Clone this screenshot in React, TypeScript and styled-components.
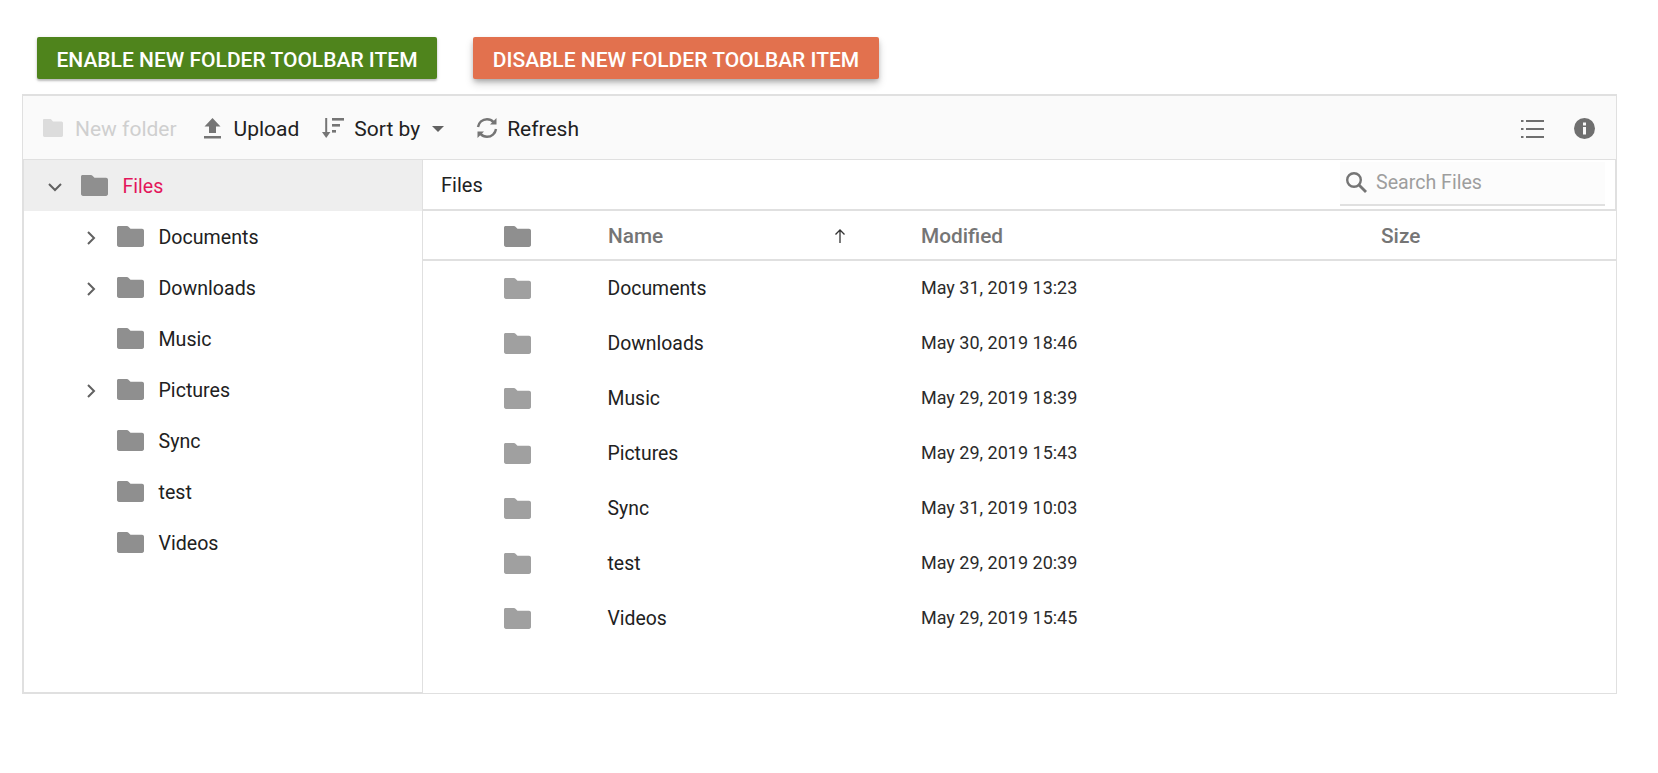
import React from "react";
import styled, { createGlobalStyle } from "styled-components";

const GlobalStyle = createGlobalStyle`
  html, body {
    margin: 0;
    padding: 0;
    background: #fff;
    font-family: Roboto, "Liberation Sans", sans-serif;
  }
`;

const Page = styled.div`
  padding: 37px 41px 0 22px;
`;

const ButtonRow = styled.div`
  display: flex;
  gap: 36px;
  padding-left: 15px;
  margin-bottom: 15px;
`;

const ActionButton = styled.button<{ $bg: string; $raised?: boolean }>`
  height: 42px;
  width: ${(p) => (p.$raised ? 406 : 400)}px;
  padding: 3px 0 0;
  border: 0;
  border-radius: 2px;
  background: ${(p) => p.$bg};
  color: #fff;
  font-family: inherit;
  font-size: 21px;
  font-weight: 500;
  text-transform: uppercase;
  white-space: nowrap;
  box-shadow: ${(p) =>
    p.$raised
      ? "0 3px 5px -1px rgba(0,0,0,.25), 0 5px 8px rgba(0,0,0,.16)"
      : "0 2px 2px rgba(0,0,0,.2), 0 1px 4px rgba(0,0,0,.12)"};
`;

const Manager = styled.div`
  width: 1595px;
  height: 600px;
  box-sizing: border-box;
  border: 1px solid #e0e0e0;
  border-top-width: 2px;
  display: flex;
  flex-direction: column;
`;

const Toolbar = styled.div`
  height: 64px;
  flex: none;
  box-sizing: border-box;
  background: #fafafa;
  border-bottom: 1px solid #e0e0e0;
  display: flex;
  align-items: center;
  padding: 0 21px 0 20px;
`;

const ToolItem = styled.div<{ $gap?: number; $disabled?: boolean }>`
  display: flex;
  align-items: center;
  margin-left: ${(p) => p.$gap ?? 0}px;
  color: ${(p) => (p.$disabled ? "#cfcfcf" : "#212121")};
  font-size: 21px;
  white-space: nowrap;

  svg {
    flex: none;
  }
`;

const ToolLabel = styled.span<{ $gap: number }>`
  display: flex;
  margin-left: ${(p) => p.$gap}px;
  padding-top: 2px;
`;

const ViewTools = styled.div`
  margin-left: auto;
  padding-top: 2px;
  display: flex;
  align-items: center;
`;

const Panes = styled.div`
  flex: 1;
  display: flex;
  min-height: 0;
`;

const TreePane = styled.div`
  width: 400px;
  flex: none;
  box-sizing: border-box;
  border-right: 1px solid #e0e0e0;
  border-left: 1px solid #e0e0e0;
  border-bottom: 1px solid #e0e0e0;
`;

const TreeRow = styled.div<{ $root?: boolean }>`
  height: 51px;
  display: flex;
  align-items: center;
  padding-left: ${(p) => (p.$root ? 23 : 59)}px;
  background: ${(p) => (p.$root ? "#eeeeee" : "transparent")};
  color: ${(p) => (p.$root ? "#e3165b" : "#212121")};
  font-size: 19.6px;
`;

const ChevronSlot = styled.div`
  width: 16px;
  height: 16px;
  flex: none;
  margin-right: 18px;
`;

const TreeLabel = styled.span`
  margin-left: 14.5px;
  padding-top: 2px;
`;

const ContentPane = styled.div`
  flex: 1;
  min-width: 0;
  display: flex;
  flex-direction: column;
`;

const AddressBar = styled.div`
  height: 51px;
  flex: none;
  box-sizing: border-box;
  border-bottom: 2px solid #e0e0e0;
  border-right: 1px solid #e0e0e0;
  display: flex;
  align-items: center;
  justify-content: space-between;
  padding: 0 10px 0 18px;
  font-size: 20px;
  color: #212121;
`;

const SearchBox = styled.div`
  width: 265px;
  height: 44px;
  margin-bottom: 2px;
  box-sizing: border-box;
  background: #fcfcfc;
  border-bottom: 2px solid #e0e0e0;
  display: flex;
  align-items: center;
  gap: 9px;
  padding: 0 0 1px 5px;
  color: #9e9e9e;
  font-size: 19.6px;
`;

const HeaderRow = styled.div`
  height: 50px;
  flex: none;
  box-sizing: border-box;
  border-bottom: 2px solid #e0e0e0;
  padding-top: 2px;
  display: grid;
  grid-template-columns: 81px 104px 313px 460px 1fr;
  align-items: center;
  color: #757575;
  font-size: 20.8px;
  font-weight: 500;
`;

const DataRow = styled.div`
  height: 55px;
  flex: none;
  display: grid;
  grid-template-columns: 81px 103.5px 313.5px 1fr;
  align-items: center;
  color: #212121;
  font-size: 19.4px;
`;

const IconCell = styled.div`
  grid-column: 2;
  display: flex;
`;

const NameHead = styled.div`
  display: flex;
  justify-content: space-between;
  width: 238px;
  align-items: center;
`;

const DateCell = styled.div`
  font-size: 18px;
  padding-bottom: 2px;
  color: #2b2b2b;
`;

const FolderIcon: React.FC<{ w?: number; h?: number; color: string }> = ({ w = 27, h = 21, color }) => (
  <svg width={w} height={h} viewBox="0 0 27 22" preserveAspectRatio="none">
    <path
      d="M1.5 0H10c.5 0 .9.2 1.2.5L13.5 3H25c1.1 0 2 .9 2 2v15c0 1.1-.9 2-2 2H2c-1.100 0-2-.9-2-2V1.500C0 .7.7 0 1.500 0Z"
      fill={color}
    />
  </svg>
);

const ChevronDown = () => (
  <svg width="16" height="16" viewBox="0 0 16 16" fill="none" stroke="#616161" strokeWidth="2">
    <path d="M2 4l6 6 6-6" />
  </svg>
);

const ChevronRight = () => (
  <svg width="16" height="16" viewBox="0 0 16 16" fill="none" stroke="#616161" strokeWidth="2">
    <path d="M5 1l6 6-6 6" />
  </svg>
);

const UploadIcon = () => (
  <svg width="19" height="22" viewBox="0 0 19 22" fill="#757575">
    <path d="M9.500 1l8 8.500H13V16H6V9.500H1.500Z" />
    <rect x="1" y="19" width="17" height="2.500" />
  </svg>
);

const SortIcon = () => (
  <svg width="23" height="22" viewBox="0 0 23 22" fill="#757575">
    <rect x="3.200" y="1" width="2" height="17" />
    <path d="M0 15h8.400l-4.200 6Z" />
    <rect x="10" y="1" width="12" height="2.600" />
    <rect x="10" y="7" width="8" height="2.600" />
    <rect x="10" y="13" width="4" height="2.600" />
  </svg>
);

const Caret = () => (
  <svg width="12" height="6" viewBox="0 0 12 6" fill="#616161">
    <path d="M0 0h12L6 6Z" />
  </svg>
);

const RefreshIcon = () => (
  <svg width="22" height="22" viewBox="0 0 22 22" fill="none" stroke="#757575" strokeWidth="2.400">
    <path d="M2 10C2.600 5.500 6.400 2.200 11 2.200c2.600 0 4.900 1.100 6.500 2.900" />
    <path d="M20 12c-.6 4.500-4.400 7.800-9 7.800-2.600 0-4.900-1.100-6.500-2.900" />
    <path d="M20.500 1v6.500H14Z" fill="#757575" stroke="none" />
    <path d="M1.500 21v-6.500H8Z" fill="#757575" stroke="none" />
  </svg>
);

const ListIcon = () => (
  <svg width="23" height="20" viewBox="0 0 23 20" fill="#6f6f6f">
    <rect x="0" y="1" width="2.500" height="2" />
    <rect x="5" y="1" width="18" height="2" />
    <rect x="0" y="9" width="2.500" height="2" />
    <rect x="5" y="9" width="18" height="2" />
    <rect x="0" y="17" width="2.500" height="2" />
    <rect x="5" y="17" width="18" height="2" />
  </svg>
);

const InfoIcon = () => (
  <svg width="21" height="21" viewBox="0 0 21 21">
    <circle cx="10.500" cy="10.500" r="10.500" fill="#6f6f6f" />
    <rect x="9" y="9" width="3" height="7.500" fill="#fafafa" />
    <rect x="9" y="4.500" width="3" height="3" fill="#fafafa" />
  </svg>
);

const SearchIcon = () => (
  <svg width="22" height="22" viewBox="0 0 22 22" fill="none" stroke="#757575" strokeWidth="2.400">
    <circle cx="9" cy="9" r="6.800" />
    <path d="M14 14l7 7" strokeWidth="2.800" />
  </svg>
);

const ArrowUp = () => (
  <svg width="12" height="14" viewBox="0 0 12 14" fill="none" stroke="#333" strokeWidth="1.300">
    <path d="M6 14V1M1.500 5.500L6 1l4.500 4.500" />
  </svg>
);

const treeItems = [
  { name: "Documents", expandable: true },
  { name: "Downloads", expandable: true },
  { name: "Music", expandable: false },
  { name: "Pictures", expandable: true },
  { name: "Sync", expandable: false },
  { name: "test", expandable: false },
  { name: "Videos", expandable: false },
];

const files = [
  { name: "Documents", modified: "May 31, 2019 13:23" },
  { name: "Downloads", modified: "May 30, 2019 18:46" },
  { name: "Music", modified: "May 29, 2019 18:39" },
  { name: "Pictures", modified: "May 29, 2019 15:43" },
  { name: "Sync", modified: "May 31, 2019 10:03" },
  { name: "test", modified: "May 29, 2019 20:39" },
  { name: "Videos", modified: "May 29, 2019 15:45" },
];

const App: React.FC = () => {
  return (
    <Page>
      <GlobalStyle />
      <ButtonRow>
        <ActionButton $bg="#4f841c">Enable New Folder Toolbar Item</ActionButton>
        <ActionButton $bg="#e2714e" $raised>
          Disable New Folder Toolbar Item
        </ActionButton>
      </ButtonRow>
      <Manager>
        <Toolbar>
          <ToolItem $disabled>
            <FolderIcon w={20} h={18} color="#dcdcdc" />
            <ToolLabel $gap={12}>New folder</ToolLabel>
          </ToolItem>
          <ToolItem $gap={26}>
            <UploadIcon />
            <ToolLabel $gap={12}>Upload</ToolLabel>
          </ToolItem>
          <ToolItem $gap={23}>
            <SortIcon />
            <ToolLabel $gap={9}>Sort by</ToolLabel>
            <ToolLabel $gap={12}>
              <Caret />
            </ToolLabel>
          </ToolItem>
          <ToolItem $gap={32}>
            <RefreshIcon />
            <ToolLabel $gap={9}>Refresh</ToolLabel>
          </ToolItem>
          <ViewTools>
            <ToolItem>
              <ListIcon />
            </ToolItem>
            <ToolItem $gap={30}>
              <InfoIcon />
            </ToolItem>
          </ViewTools>
        </Toolbar>
        <Panes>
          <TreePane>
            <TreeRow $root>
              <ChevronSlot>
                <ChevronDown />
              </ChevronSlot>
              <FolderIcon color="#8f8f8f" />
              <TreeLabel>Files</TreeLabel>
            </TreeRow>
            {treeItems.map((item) => (
              <TreeRow key={item.name}>
                <ChevronSlot>{item.expandable && <ChevronRight />}</ChevronSlot>
                <FolderIcon color="#8f8f8f" />
                <TreeLabel>{item.name}</TreeLabel>
              </TreeRow>
            ))}
          </TreePane>
          <ContentPane>
            <AddressBar>
              <span>Files</span>
              <SearchBox>
                <SearchIcon />
                <span>Search Files</span>
              </SearchBox>
            </AddressBar>
            <HeaderRow>
              <IconCell>
                <FolderIcon color="#8f8f8f" />
              </IconCell>
              <NameHead>
                <span>Name</span>
                <ArrowUp />
              </NameHead>
              <span>Modified</span>
              <span>Size</span>
            </HeaderRow>
            {files.map((file) => (
              <DataRow key={file.name}>
                <IconCell>
                  <FolderIcon color="#a0a0a0" />
                </IconCell>
                <span>{file.name}</span>
                <DateCell>{file.modified}</DateCell>
              </DataRow>
            ))}
          </ContentPane>
        </Panes>
      </Manager>
    </Page>
  );
};

export default App;
